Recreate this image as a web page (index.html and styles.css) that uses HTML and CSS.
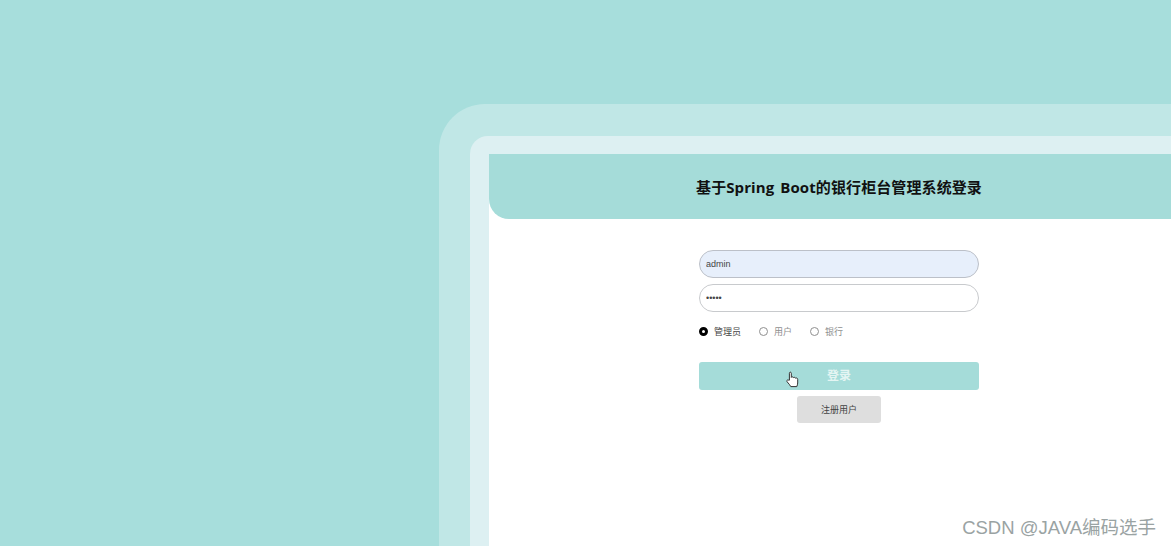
FILE: index.html
```html
<!DOCTYPE html>
<html lang="zh-CN">
<head>
    <meta charset="UTF-8">
    <meta name="viewport" content="width=device-width, initial-scale=1.0">
    <title>银行柜台管理系统登录</title>
    <link rel="stylesheet" href="styles.css">
</head>
<body>
    <div class="frame-outer">
        <div class="frame-inner">
            <div class="login-box">
                <header class="login-header">
                    <h1>基于Spring Boot的银行柜台管理系统登录</h1>
                </header>
                <form class="login-form" action="#" method="post">
                    <input class="field field-filled" type="text" name="username" value="admin">
                    <input class="field" type="password" name="password" value="admin">
                    <div class="roles">
                        <label class="role role-active"><input type="radio" name="role" checked>管理员</label>
                        <label class="role"><input type="radio" name="role">用户</label>
                        <label class="role"><input type="radio" name="role">银行</label>
                    </div>
                    <button class="btn-login" type="button">登录</button>
                    <button class="btn-register" type="button">注册用户</button>
                </form>
            </div>
        </div>
    </div>

    <!-- puntero capturado en la imagen -->
    <svg class="hand-cursor" width="13" height="17" viewBox="0 0 13 17">
        <path d="M3.4 9.2V2.2C3.4 0.8 5.3 0.8 5.3 2.2V6.4C5.6 5.6 7.2 5.6 7.4 6.7C7.8 6 9.2 6.2 9.4 7.2C10 6.7 11.6 6.9 11.7 8.3V12C11.7 13.4 11.2 14.2 10.8 15.6H4.8C4 14 2.8 12.8 1.2 10.9C0.2 9.6 1.6 8.2 2.7 9.2Z" fill="#fff" stroke="#333" stroke-width="1" stroke-linejoin="round"/>
    </svg>

    <div class="watermark">CSDN @JAVA编码选手</div>
</body>
</html>
```

FILE: styles.css
```css
* {
    box-sizing: border-box;
}

html, body {
    height: 100%;
}

body {
    position: relative;
    display: flex;
    margin: 0;
    padding: 104px 0 0 439px;
    overflow: hidden;
    background-color: #a7dedc;
    font-family: "Liberation Sans", "Noto Sans CJK SC", sans-serif;
}

.frame-outer {
    flex: 1;
    min-width: 0;
    padding: 32px 0 0 31px;
    overflow: hidden;
    background-color: #c0e7e6;
    border-radius: 46px 0 0 0;
}

.frame-inner {
    height: 100%;
    padding: 18px 0 0 19px;
    overflow: hidden;
    background-color: #ddf0f2;
    border-radius: 18px 0 0 0;
}

.login-box {
    width: 700px;
    height: 100%;
    overflow: hidden;
    background-color: #ffffff;
}

.login-header {
    display: flex;
    align-items: center;
    justify-content: center;
    height: 65px;
    background-color: #a5dcd9;
    border-radius: 0 0 0 20px;
}

h1 {
    margin: 0;
    font-family: "Open Sans", "Noto Sans CJK SC", sans-serif;
    font-size: 15px;
    font-weight: bold;
    letter-spacing: 0.1px;
    word-spacing: 2px;
    color: #111111;
}

.login-form {
    display: flex;
    flex-direction: column;
    align-items: center;
    width: 280px;
    margin: 31px auto 0;
}

.field {
    width: 100%;
    height: 28px;
    margin-bottom: 6px;
    padding: 0 6px;
    background-color: #ffffff;
    border: 1px solid #c8cacd;
    border-radius: 14px;
    outline: none;
    font-family: inherit;
    font-size: 9px;
    color: #444444;
}

.field-filled {
    background-color: #e7effb;
    border-color: #bcc0c8;
}

.roles {
    display: flex;
    align-items: center;
    align-self: flex-start;
    gap: 18px;
    height: 14px;
    margin-top: 6px;
}

.role {
    display: flex;
    align-items: center;
    gap: 6px;
    font-size: 9px;
    color: #8f8f8f;
}

.role-active {
    color: #444444;
}

.role input {
    appearance: none;
    width: 9px;
    height: 9px;
    margin: 0;
    background-color: #ffffff;
    border: 1px solid #8f8f8f;
    border-radius: 50%;
}

.role input:checked {
    background-color: #ffffff;
    border: 3px solid #000000;
}

button {
    font-family: inherit;
    border: none;
    border-radius: 3px;
}

.btn-login {
    width: 100%;
    height: 28px;
    margin-top: 24px;
    padding-bottom: 4px;
    background-color: #a5dcd9;
    font-size: 12px;
    font-weight: bold;
    color: #e4f5f3;
}

.btn-register {
    width: 84px;
    height: 27px;
    margin-top: 6px;
    background-color: #dedede;
    font-size: 9px;
    color: #444444;
}

.hand-cursor {
    position: absolute;
    left: 786px;
    top: 371px;
}

.watermark {
    position: absolute;
    right: 15px;
    bottom: 7px;
    font-size: 18.5px;
    color: #9aa3a3;
}
```
